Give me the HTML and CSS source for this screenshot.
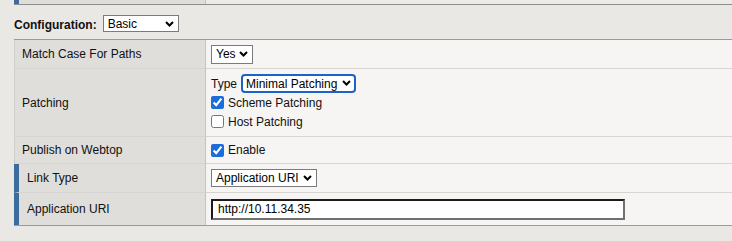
FILE: index.html
```html
<!DOCTYPE html>
<html lang="en">
<head>
    <meta charset="UTF-8">
    <title>Resource Configuration</title>
    <link rel="stylesheet" href="styles.css">
</head>
<body>
    <table class="props prev">
        <tr>
            <td class="label sub"></td>
            <td class="value"></td>
        </tr>
    </table>

    <div class="config">
        <span class="config-label">Configuration:</span>
        <span class="sel">
            <select class="basic"><option>Basic</option><option>Advanced</option></select>
            <svg class="chev" width="9" height="6" viewBox="0 0 9 6"><polyline points="1,1 4.5,4.5 8,1" fill="none" stroke="#000" stroke-width="2"/></svg>
        </span>
    </div>

    <table class="props main">
        <tr class="r1">
            <td class="label">Match Case For Paths</td>
            <td class="value">
                <span class="sel">
                    <select class="yes"><option>Yes</option><option>No</option></select>
                    <svg class="chev" width="9" height="6" viewBox="0 0 9 6"><polyline points="1,1 4.5,4.5 8,1" fill="none" stroke="#000" stroke-width="2"/></svg>
                </span>
            </td>
        </tr>
        <tr class="r2">
            <td class="label">Patching</td>
            <td class="value">
                <div class="line">
                    <span class="type-label">Type</span>
                    <span class="sel">
                        <select class="patch focused"><option>Minimal Patching</option><option>Full Patching</option></select>
                        <svg class="chev" width="9" height="6" viewBox="0 0 9 6"><polyline points="1,1 4.5,4.5 8,1" fill="none" stroke="#000" stroke-width="2"/></svg>
                    </span>
                </div>
                <label class="line check"><input type="checkbox" checked> Scheme Patching</label>
                <label class="line check"><input type="checkbox"> Host Patching</label>
            </td>
        </tr>
        <tr class="r3">
            <td class="label">Publish on Webtop</td>
            <td class="value">
                <label class="line check"><input type="checkbox" checked> Enable</label>
            </td>
        </tr>
        <tr class="r4">
            <td class="label sub">Link Type</td>
            <td class="value">
                <span class="sel">
                    <select class="link"><option>Application URI</option><option>Filter</option></select>
                    <svg class="chev" width="9" height="6" viewBox="0 0 9 6"><polyline points="1,1 4.5,4.5 8,1" fill="none" stroke="#000" stroke-width="2"/></svg>
                </span>
            </td>
        </tr>
        <tr class="r5">
            <td class="label sub">Application URI</td>
            <td class="value">
                <input type="text" class="uri" value="http://10.11.34.35">
            </td>
        </tr>
    </table>
</body>
</html>
```

FILE: styles.css
```css
:root { --page: #e9e8e5; --label-bg: #dfdedb; --value-bg: #f6f5f3; --line: #d6d5d2; --edge: #9a9a9a; --bar: #3b6c9d; }
body { margin: 0; background: var(--page); font-family: "Liberation Sans", Arial, sans-serif; font-size: 12px; color: #111; }

.props { border-collapse: separate; border-spacing: 0; margin-left: 14px; width: calc(100% - 14px); }
.props td { box-sizing: border-box; padding: 0; vertical-align: middle; border-bottom: 1px solid var(--line); }
.props tr:last-child td { border-bottom: none; }
.label { width: 192px; background: var(--label-bg); border-left: 1px solid #cfceca; border-right: 1px solid #c4c3c0; padding-left: 7px !important; }
.label.sub { border-left: 5px solid var(--bar); padding-left: 8px !important; }
.value { background: var(--value-bg); padding-left: 5px !important; }

.prev { border-bottom: 1px solid #8e8e8e; }
.prev td { height: 4px; border-bottom: none; }
.prev .value { background: #ecebe8; }

.config { height: 17px; padding-top: 10px; display: flex; align-items: flex-end; padding-left: 14px; }
.config-label { font-weight: bold; margin-right: 6px; line-height: 14px; }

.main { margin-top: 7px; border-top: 1px solid var(--edge); border-bottom: 1px solid var(--edge); }
.r1 td { height: 29px; }
.r2 td { height: 68px; }
.r3 td { height: 27px; }
.r4 td { height: 29px; }
.r5 td { height: 32px; }

.sel { position: relative; display: inline-block; vertical-align: middle; }
.sel select { appearance: none; -webkit-appearance: none; margin: 0; border: 1px solid #7b7b7b; border-radius: 0; background: #fff; font-family: inherit; font-size: 12px; color: #000; height: 18px; padding: 0 16px 0 4px; display: block; }
.sel .chev { position: absolute; right: 5px; top: 6px; pointer-events: none; }
select.basic { width: 76px; height: 17px; padding-left: 4px; }
select.yes { width: 42px; height: 19px; }
select.link { width: 106px; height: 18px; }
select.patch.focused { width: 115px; height: 19px; border: 2px solid #1c63c9; border-radius: 4px; padding-left: 3px; }

.line { display: flex; align-items: center; height: 18px; }
.line + .line { margin-top: 1px; }
.type-label { margin-right: 4px; }
.check input { margin: 0 4px 0 0; width: 13px; height: 13px; accent-color: #1a6ddb; }

.uri { box-sizing: border-box; width: 414px; height: 21px; margin: 0; padding: 0 5px; font-family: inherit; font-size: 12px; color: #000; background: #fff; border: 2px solid; border-color: #1b1b1b #707070 #707070 #1b1b1b; outline: none; display: block; }
```
